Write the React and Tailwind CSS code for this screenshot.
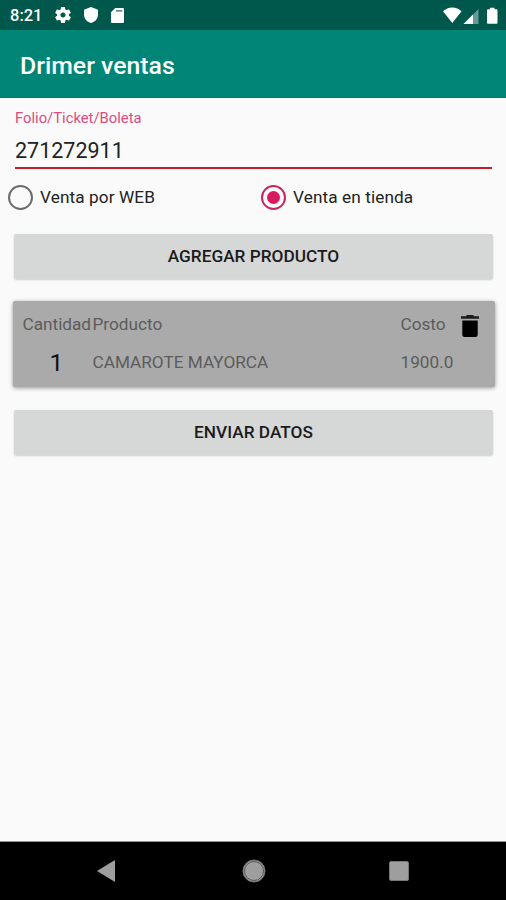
import React, { useState } from "react";
import clsx from "clsx";

// Status bar icons
function GearIcon() {
  return (
    <svg viewBox="2 2 20 20" className="h-[16px] w-[16px]" fill="currentColor">
      <path d="M19.43 12.98c.04-.32.07-.64.07-.98s-.03-.66-.07-.98l2.11-1.65c.19-.15.24-.42.12-.64l-2-3.46c-.12-.22-.39-.3-.61-.22l-2.49 1c-.52-.4-1.08-.73-1.69-.98l-.38-2.65C14.46 2.18 14.25 2 14 2h-4c-.25 0-.46.18-.49.42l-.38 2.65c-.61.25-1.17.59-1.69.98l-2.49-1c-.23-.09-.49 0-.61.22l-2 3.46c-.13.22-.07.49.12.64l2.11 1.65c-.04.32-.07.65-.07.98s.03.66.07.98l-2.11 1.65c-.19.15-.24.42-.12.64l2 3.46c.12.22.39.3.61.22l2.49-1c.52.4 1.08.73 1.69.98l.38 2.65c.03.24.24.42.49.42h4c.25 0 .46-.18.49-.42l.38-2.65c.61-.25 1.17-.59 1.69-.98l2.49 1c.23.09.49 0 .61-.22l2-3.46c.12-.22.07-.49-.12-.64l-2.11-1.65zM12 15.2c-1.77 0-3.2-1.43-3.2-3.2s1.43-3.2 3.2-3.2 3.2 1.43 3.2 3.2-1.43 3.2-3.2 3.2z" />
    </svg>
  );
}

function ShieldIcon() {
  return (
    <svg viewBox="0 0 14 16" className="h-[16px] w-[14px]" fill="currentColor">
      <path d="M7 0 0 2.7v4.8C0 11.5 3 15 7 16c4-1 7-4.5 7-8.5V2.7z" />
    </svg>
  );
}

function SdCardIcon() {
  return (
    <svg viewBox="0 0 13 15" className="h-[15px] w-[13px]">
      <path fill="white" d="M4.3 0H11.7C12.5 0 13 .5 13 1.3V13.7C13 14.5 12.500 15 11.7 15H1.3C.5 15 0 14.500 0 13.7V4.3z" />
      <path fill="#00574b" opacity=".65" d="M5 2h6.200v1.700H5z" />
    </svg>
  );
}

function StatusBar() {
  return (
    <div className="flex h-[30px] items-center bg-[#00574b] text-white">
      <span className="ml-[10px] w-[45px] pt-[2px] text-[16.5px] font-medium">8:21</span>
      <GearIcon />
      <span className="ml-[13px]">
        <ShieldIcon />
      </span>
      <span className="ml-[13px]">
        <SdCardIcon />
      </span>
      <svg viewBox="0 0 55 17" className="mr-[8px] ml-auto h-[17px] w-[55px]">
        {/* wifi */}
        <path fill="white" d="M0 4.3C2.5 2 5.7.6 9.3.6s6.8 1.4 9.3 3.7L9.3 16z" />
        {/* signal */}
        <path fill="white" opacity=".4" d="M35.5 2v15H20.5z" />
        <path fill="white" d="M30 7.5V17H20.5z" />
        {/* battery */}
        <path fill="white" d="M47 .8h4.500v1.500h1.700c.7 0 1.300.5 1.300 1.200v12c0 .8-.5 1.300-1.300 1.300h-7.900c-.8 0-1.300-.5-1.300-1.300v-12c0-.7.6-1.200 1.300-1.200H47z" />
      </svg>
    </div>
  );
}

function RadioOption({ label, checked, onSelect }) {
  return (
    <button
      type="button"
      role="radio"
      aria-checked={checked}
      onClick={onSelect}
      className="flex w-[253px] items-center pl-[8px]"
    >
      <span
        className={clsx(
          "flex h-[25px] w-[25px] items-center justify-center rounded-full border-2",
          checked ? "border-[#c8265c]" : "border-[#6b6b6b]"
        )}
      >
        {checked && <span className="h-[13px] w-[13px] rounded-full bg-[#d81b60]" />}
      </span>
      <span className="ml-[7px] pt-px text-[17.2px] tracking-[0.1px] text-[#222]">{label}</span>
    </button>
  );
}

function ActionButton({ children }) {
  return (
    <button
      type="button"
      className="mx-[14px] block h-[45px] w-[479px] rounded-[2px] bg-[#d6d8d7] pt-px text-center text-[17.25px] font-medium text-[#1b1b1b] shadow-[0_1px_2px_rgba(0,0,0,0.18)]"
    >
      {children}
    </button>
  );
}

function ProductCard({ quantity, name, cost }) {
  return (
    <div className="ml-[12.5px] h-[86px] w-[482px] rounded-[2px] bg-[#aaaaaa] pt-[11px] pl-[10px] text-[17.2px] text-[#5c5c5c] shadow-[0_1px_4px_rgba(0,0,0,0.4)]">
      <div className="flex h-[26px] items-center">
        <span className="w-[70px]">Cantidad</span>
        <span className="w-[308px]">Producto</span>
        <span className="w-[60px]">Costo</span>
        <svg viewBox="0 0 18 22" className="mt-[2px] h-[22px] w-[18px]">
          <path fill="#1c1c1c" d="M0 1.2h4.8L6 0h6l1.2 1.2H18v2.500H0z" />
          <path fill="black" d="M1.3 5.500h15.400v14.200c0 1.300-1 2.300-2.300 2.300H3.600c-1.300 0-2.300-1-2.300-2.300z" />
        </svg>
      </div>
      <div className="mt-[12px] flex h-[26px] items-center">
        <span className="w-[70px] pl-[27px] text-[24.6px] text-[#111]">{quantity}</span>
        <span className="w-[308px]">{name}</span>
        <span>{cost}</span>
      </div>
    </div>
  );
}

function NavigationBar() {
  return (
    <div className="flex h-[58px] items-center bg-black pl-[97px]">
      <svg viewBox="0 0 18 22" className="h-[22px] w-[18px]">
        <path fill="#9e9e9e" d="M18 0v22L0 11z" />
      </svg>
      <svg viewBox="0 0 24 24" className="ml-[127px] h-[24px] w-[24px]">
        <circle cx="12" cy="12" r="11" fill="#9e9e9e" stroke="#737373" />
        <circle cx="12" cy="12" r="9.5" fill="none" stroke="#585858" />
      </svg>
      <span className="ml-[123px] h-[20px] w-[20px] rounded-[2px] border border-[#777] bg-[#9e9e9e]" />
    </div>
  );
}

export default function App() {
  const [folio, setFolio] = useState("271272911");
  const [saleType, setSaleType] = useState("tienda");

  return (
    <div className="flex h-[900px] w-[506px] flex-col overflow-hidden bg-[#fafafa] font-['Roboto',sans-serif]">
      <StatusBar />
      <header className="flex h-[68px] shrink-0 items-center border-b border-[#00796b] bg-[#008577] pt-[5px] pl-[20px]">
        <h1 className="text-[24.8px] font-medium text-white">Drimer ventas</h1>
      </header>

      <main className="flex-1 border-b border-[#999]">
        <div className="mr-[14px] ml-[15px] h-[71px] border-b-2 border-[#c4202b] pt-[10px]">
          <label htmlFor="folio" className="block h-[20px] text-[14.8px] leading-[20px] text-[#dc4c80]">
            Folio/Ticket/Boleta
          </label>
          <input
            id="folio"
            value={folio}
            onChange={(e) => setFolio(e.target.value)}
            className="mt-[8px] block h-[30px] w-full bg-transparent text-[21.5px] text-[#222] outline-none"
          />
        </div>

        <div role="radiogroup" className="mt-[15px] flex h-[27px]">
          <RadioOption
            label="Venta por WEB"
            checked={saleType === "web"}
            onSelect={() => setSaleType("web")}
          />
          <RadioOption
            label="Venta en tienda"
            checked={saleType === "tienda"}
            onSelect={() => setSaleType("tienda")}
          />
        </div>

        <div className="mt-[23px] flex flex-col gap-[22px]">
          <ActionButton>AGREGAR PRODUCTO</ActionButton>
          <ProductCard quantity={1} name="CAMAROTE MAYORCA" cost="1900.0" />
          <div className="pt-px">
            <ActionButton>ENVIAR DATOS</ActionButton>
          </div>
        </div>
      </main>

      <NavigationBar />
    </div>
  );
}
